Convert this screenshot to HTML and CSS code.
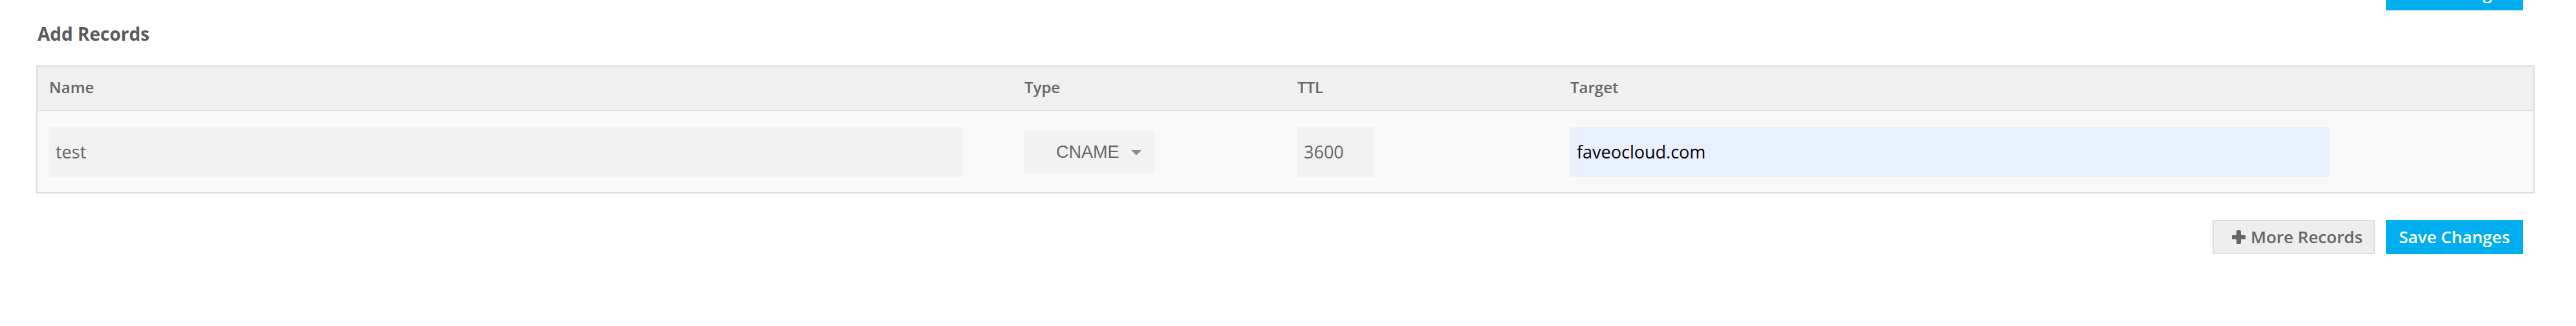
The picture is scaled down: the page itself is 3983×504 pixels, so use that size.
FILE: index.html
```html
<!DOCTYPE html>
<html lang="en">
<head>
<meta charset="utf-8">
<title>Add Records</title>
<link rel="stylesheet" href="styles.css">
</head>
<body>
<div class="page">
  <div class="top-actions">
    <button class="btn btn-primary" type="button">Save Changes</button>
  </div>
  <h4 class="title">Add Records</h4>
  <div class="records">
    <div class="records-head">
      <div class="cell">Name</div>
      <div class="cell">Type</div>
      <div class="cell">TTL</div>
      <div class="cell">Target</div>
    </div>
    <div class="records-row">
      <div class="cell"><div class="field field-name">test</div></div>
      <div class="cell">
        <div class="select">
          <span class="select-value">CNAME</span>
          <span class="caret"></span>
        </div>
      </div>
      <div class="cell"><div class="field field-ttl">3600</div></div>
      <div class="cell"><div class="field field-target">faveocloud.com</div></div>
    </div>
  </div>
  <div class="actions">
    <button class="btn btn-default" type="button">
      <svg class="icon-plus" viewBox="0 0 21 21" width="21" height="21" aria-hidden="true">
        <rect x="7" y="0" width="7" height="21" rx="1.5" fill="#666"/>
        <rect x="0" y="7" width="21" height="7" rx="1.5" fill="#666"/>
      </svg>
      <span>More Records</span>
    </button>
    <button class="btn btn-primary" type="button">Save Changes</button>
  </div>
</div>
</body>
</html>
```

FILE: styles.css
```css
html, body {
  margin: 0;
  padding: 0;
  background: #ffffff;
}

body {
  font-family: "Open Sans", "Liberation Sans", Arial, sans-serif;
  color: #666666;
  overflow: hidden;
}

.page {
  padding: 0 64px 0 56px;
}

.top-actions {
  display: flex;
  justify-content: flex-end;
  padding-right: 18px;
  margin-top: -37px;
}

.btn {
  box-sizing: border-box;
  height: 53px;
  font-family: "Open Sans", "Liberation Sans", Arial, sans-serif;
  font-size: 26px;
  font-weight: 600;
  line-height: 35px;
  border-radius: 0;
  display: inline-flex;
  align-items: center;
  cursor: pointer;
}

.btn-primary {
  width: 212px;
  justify-content: center;
  background: #00aeef;
  color: #ffffff;
  border: none;
  padding: 0;
}

.btn-default {
  width: 251px;
  background: #eeeeee;
  color: #666666;
  border: 2px solid #dddddd;
  padding: 0 0 0 28px;
  gap: 8px;
}

.icon-plus {
  display: block;
  flex: none;
}

.title {
  margin: 16px 0 0 2px;
  font-size: 28px;
  font-weight: 700;
  line-height: 40px;
  color: #5b5b5b;
}

.records {
  margin-top: 29px;
  border: 2px solid #dddddd;
}

.records-head,
.records-row {
  display: grid;
  grid-template-columns: 1508px 422px 422px 1fr;
}

.records-head {
  background: #f0f0f0;
  border-bottom: 2px solid #dddddd;
  padding: 15px 0 18px;
  font-size: 24px;
  font-weight: 600;
  line-height: 34px;
  color: #666666;
}

.records-head .cell {
  padding-left: 18px;
}

.records-row {
  background: #f9f9f9;
  padding: 24px 0 23px;
  align-items: center;
}

.records-row .cell {
  padding-left: 17px;
  display: flex;
  align-items: center;
}

.field {
  box-sizing: border-box;
  height: 78px;
  padding: 0 11px;
  background: #f2f2f2;
  font-size: 27px;
  line-height: 78px;
  color: #666666;
  white-space: nowrap;
}

.field-name {
  width: 1412px;
}

.field-ttl {
  width: 120px;
}

.field-target {
  width: 1175px;
  background: #e8f0fe;
  color: #000000;
}

.select {
  box-sizing: border-box;
  width: 201px;
  height: 64px;
  padding-left: 50px;
  background: #f2f2f2;
  display: flex;
  align-items: center;
  gap: 18px;
  font-family: "Liberation Sans", Arial, sans-serif;
  font-size: 27px;
  color: #666666;
}

.caret {
  width: 0;
  height: 0;
  border-left: 8px solid transparent;
  border-right: 8px solid transparent;
  border-top: 8px solid #8a8a8a;
  margin-top: 2px;
}

.actions {
  display: flex;
  justify-content: flex-end;
  gap: 17px;
  margin-top: 41px;
  padding-right: 18px;
}
```
